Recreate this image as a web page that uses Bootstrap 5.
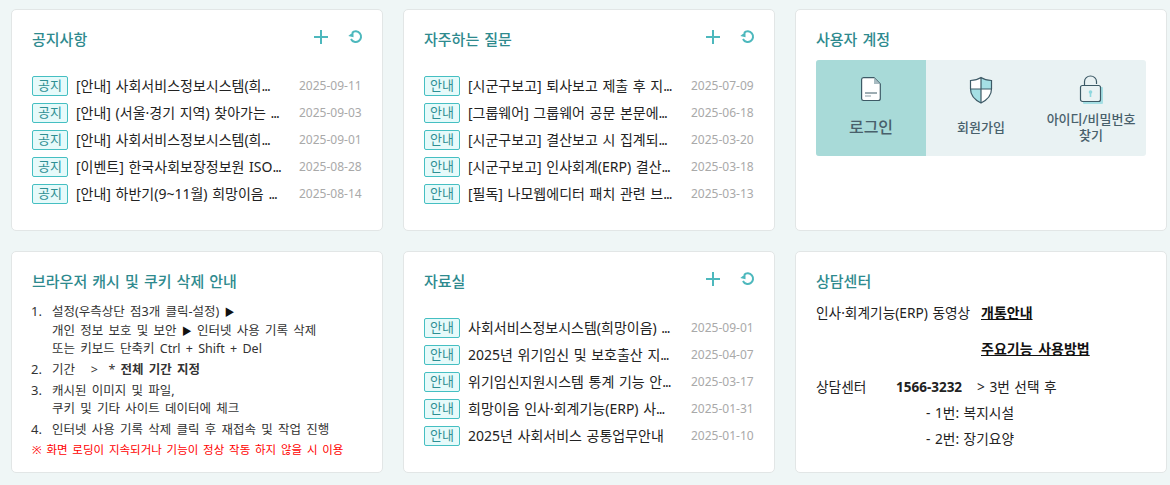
<!DOCTYPE html>
<html lang="ko">
<head>
<meta charset="utf-8">
<title>대시보드</title>
<link href="https://cdn.jsdelivr.net/npm/bootstrap@5.3.0/dist/css/bootstrap.min.css" rel="stylesheet">
<style>
html,body{height:485px;overflow:hidden}
body{background:#eff6f6;font-family:"Noto Sans","Noto Sans CJK KR",sans-serif;color:#212529;font-size:14px}
.board{display:grid;grid-template-columns:repeat(3,372px);grid-template-rows:222px 222px;column-gap:20px;row-gap:20px;padding:9px 0 0 11px}
.panel{border:1px solid #e2e6e6;border-radius:5px;background:#fff;padding:19px 20px 0 20px;position:relative}
.panel-title{font-size:15px;font-weight:500;color:#2e8a8e;margin:0;line-height:20px;word-spacing:1.2px}
.tools{gap:19px;margin-right:-1px;color:#4db8bd}
.tools svg{display:block}
.head{height:20px;margin-bottom:27px}
.rows{margin:0;padding:0;list-style:none}
.rows li{height:27px;display:flex;align-items:flex-start}
.tag{width:36px;height:20px;border:1px solid #45bfc2;border-radius:2px;background:#e6fafa;color:#2e8f93;font-size:13px;line-height:17px;text-align:center;flex:none;margin-right:8px}
.subject{width:223px;font-size:14px;line-height:20px;color:#222;flex:none;white-space:nowrap;overflow:hidden;word-spacing:1px}
.dots{font-style:normal;letter-spacing:-1px}
.when{font-size:12px;line-height:20px;color:#a9a9a9;white-space:nowrap}
.tiles{display:grid;grid-template-columns:repeat(3,110px);height:96px;margin-top:11px;border-radius:3px;overflow:hidden;background:#e9f2f3}
.tile{color:#48606b;font-size:13px;font-weight:500;line-height:16px;text-align:center;display:flex;flex-direction:column;align-items:center;padding-top:15px}
.tile svg{display:block;flex:none}
.tile span{display:flex;align-items:center;justify-content:center;height:32px;margin-top:6px}
.tile.on{background:#a8dad8;font-size:16px}
.guide{margin:12px 0 0 0;padding:0 0 0 20px;font-size:12.5px;line-height:17.6px;color:#333;word-spacing:2px}
.guide li{margin-bottom:3.4px}
.guide li::marker{content:counter(list-item) ".\00a0\00a0\00a0";font-size:13px;word-spacing:0}
.tri{font-size:10px;color:#111}
.warn{font-size:11.5px;line-height:16px;color:#f00;margin:3px 0 0;word-spacing:1.8px}
.info{font-size:13.7px;line-height:20px;color:#222;margin-top:12px;word-spacing:1px}
.info-row{display:flex}
.gap-a{margin-top:16px}
.gap-b{margin-top:18px}
.gap-c{margin-top:6px;padding-left:110px}
.lbl{width:165px;flex:none}
.info a{color:#111;font-weight:700;font-size:14px;text-decoration:underline;word-spacing:2px}
.num{width:80px;flex:none}
.num2{font-weight:700;font-size:13.5px;width:81px;flex:none}
</style>
</head>
<body>
<main class="board">

<section class="panel">
  <div class="head d-flex justify-content-between align-items-start">
    <h2 class="panel-title">공지사항</h2>
    <div class="tools d-flex">
      <svg width="16" height="16" viewBox="0 0 16 16"><path d="M8 1v14M1 8h14" stroke="currentColor" stroke-width="2" fill="none"/></svg>
      <svg width="15" height="16" viewBox="0 0 15 16"><path d="M4 3.900A5.300 5.300 0 1 1 3 10" stroke="currentColor" stroke-width="2" fill="none"/><path d="M0.300 7 5.500 2.800V8.300z" fill="currentColor"/></svg>
    </div>
  </div>
  <ul class="rows">
    <li><span class="tag">공지</span><span class="subject">[안내] 사회서비스정보시스템(희<i class="dots">...</i></span><span class="when">2025-09-11</span></li>
    <li><span class="tag">공지</span><span class="subject">[안내] (서울·경기 지역) 찾아가는 <i class="dots">...</i></span><span class="when">2025-09-03</span></li>
    <li><span class="tag">공지</span><span class="subject">[안내] 사회서비스정보시스템(희<i class="dots">...</i></span><span class="when">2025-09-01</span></li>
    <li><span class="tag">공지</span><span class="subject">[이벤트] 한국사회보장정보원 ISO<i class="dots">...</i></span><span class="when">2025-08-28</span></li>
    <li><span class="tag">공지</span><span class="subject">[안내] 하반기(9~11월) 희망이음 <i class="dots">...</i></span><span class="when">2025-08-14</span></li>
  </ul>
</section>

<section class="panel">
  <div class="head d-flex justify-content-between align-items-start">
    <h2 class="panel-title">자주하는 질문</h2>
    <div class="tools d-flex">
      <svg width="16" height="16" viewBox="0 0 16 16"><path d="M8 1v14M1 8h14" stroke="currentColor" stroke-width="2" fill="none"/></svg>
      <svg width="15" height="16" viewBox="0 0 15 16"><path d="M4 3.900A5.300 5.300 0 1 1 3 10" stroke="currentColor" stroke-width="2" fill="none"/><path d="M0.300 7 5.500 2.800V8.300z" fill="currentColor"/></svg>
    </div>
  </div>
  <ul class="rows">
    <li><span class="tag">안내</span><span class="subject">[시군구보고] 퇴사보고 제출 후 지<i class="dots">...</i></span><span class="when">2025-07-09</span></li>
    <li><span class="tag">안내</span><span class="subject">[그룹웨어] 그룹웨어 공문 본문에<i class="dots">...</i></span><span class="when">2025-06-18</span></li>
    <li><span class="tag">안내</span><span class="subject">[시군구보고] 결산보고 시 집계되<i class="dots">...</i></span><span class="when">2025-03-20</span></li>
    <li><span class="tag">안내</span><span class="subject">[시군구보고] 인사회계(ERP) 결산<i class="dots">...</i></span><span class="when">2025-03-18</span></li>
    <li><span class="tag">안내</span><span class="subject">[필독] 나모웹에디터 패치 관련 브<i class="dots">...</i></span><span class="when">2025-03-13</span></li>
  </ul>
</section>

<section class="panel">
  <h2 class="panel-title">사용자 계정</h2>
  <div class="tiles">
    <div class="tile on">
      <svg width="26" height="30" viewBox="0 0 26 30"><path d="M5.500 2.600H16L22.300 9V23.500A2 2 0 0 1 20.300 25.500H5.500A2 2 0 0 1 3.600 23.500V4.500A2 2 0 0 1 5.500 2.600Z" fill="#fff" stroke="#3d5a66" stroke-width="1.200"/><path d="M16 2.600V9H22.300Z" fill="#a9bcc2"/><path d="M7 18H19" stroke="#3d5a66" stroke-width="1"/><path d="M7 21H13" stroke="#8b9da5" stroke-width="1"/></svg>
      <span>로그인</span>
    </div>
    <div class="tile">
      <svg width="26" height="30" viewBox="0 0 26 30"><path d="M13 2.500C16 4.500 20 5.400 23.500 5.500V14C23.500 20 19 25 13 28C7 25 2.500 20 2.500 14V5.500C6 5.400 10 4.500 13 2.500Z" fill="#fff"/><path d="M13 2.500C16 4.500 20 5.400 23.500 5.500V14H13Z" fill="#a5dfe4"/><path d="M13 14H2.500C2.500 20 7 25 13 28Z" fill="#a5dfe4"/><path d="M13 2.500C16 4.500 20 5.400 23.500 5.500V14C23.500 20 19 25 13 28C7 25 2.500 20 2.500 14V5.500C6 5.400 10 4.500 13 2.500ZM13 2.500V28M2.500 14H23.500" fill="none" stroke="#3d5a66" stroke-width="1.200"/></svg>
      <span>회원가입</span>
    </div>
    <div class="tile">
      <svg width="26" height="30" viewBox="0 0 26 30"><rect x="5" y="12" width="20" height="17" rx="1" fill="#a5dfe4"/><rect x="2.500" y="10.500" width="20" height="16" rx="2" fill="#e9f2f3" stroke="#3d5a66" stroke-width="1.200"/><path d="M6.500 10.500V6.500A6 5.500 0 0 1 18.500 6.500V9" fill="none" stroke="#3d5a66" stroke-width="1.200"/><circle cx="12.500" cy="17" r="1.800" fill="#8fd8df"/><path d="M12.500 17v5" stroke="#8fd8df" stroke-width="1.600"/></svg>
      <span>아이디/비밀번호<br>찾기</span>
    </div>
  </div>
</section>

<section class="panel">
  <h2 class="panel-title">브라우저 캐시 및 쿠키 삭제 안내</h2>
  <ol class="guide">
    <li>설정(우측상단 점3개 클릭-설정) <span class="tri">▶</span><br>개인 정보 보호 및 보안 <span class="tri">▶</span> 인터넷 사용 기록 삭제<br>또는 키보드 단축키 Ctrl + Shift + Del</li>
    <li>기간 &nbsp; &gt; &nbsp;* <b>전체 기간 지정</b></li>
    <li>캐시된 이미지 및 파일,<br>쿠키 및 기타 사이트 데이터에 체크</li>
    <li>인터넷 사용 기록 삭제 클릭 후 재접속 및 작업 진행</li>
  </ol>
  <p class="warn">※ 화면 로딩이 지속되거나 기능이 정상 작동 하지 않을 시 이용</p>
</section>

<section class="panel">
  <div class="head d-flex justify-content-between align-items-start">
    <h2 class="panel-title">자료실</h2>
    <div class="tools d-flex">
      <svg width="16" height="16" viewBox="0 0 16 16"><path d="M8 1v14M1 8h14" stroke="currentColor" stroke-width="2" fill="none"/></svg>
      <svg width="15" height="16" viewBox="0 0 15 16"><path d="M4 3.900A5.300 5.300 0 1 1 3 10" stroke="currentColor" stroke-width="2" fill="none"/><path d="M0.300 7 5.500 2.800V8.300z" fill="currentColor"/></svg>
    </div>
  </div>
  <ul class="rows">
    <li><span class="tag">안내</span><span class="subject">사회서비스정보시스템(희망이음) <i class="dots">...</i></span><span class="when">2025-09-01</span></li>
    <li><span class="tag">안내</span><span class="subject">2025년 위기임신 및 보호출산 지<i class="dots">...</i></span><span class="when">2025-04-07</span></li>
    <li><span class="tag">안내</span><span class="subject">위기임신지원시스템 통계 기능 안<i class="dots">...</i></span><span class="when">2025-03-17</span></li>
    <li><span class="tag">안내</span><span class="subject">희망이음 인사·회계기능(ERP) 사<i class="dots">...</i></span><span class="when">2025-01-31</span></li>
    <li><span class="tag">안내</span><span class="subject">2025년 사회서비스 공통업무안내</span><span class="when">2025-01-10</span></li>
  </ul>
</section>

<section class="panel">
  <h2 class="panel-title">상담센터</h2>
  <div class="info">
    <div class="info-row"><span class="lbl">인사·회계기능(ERP) 동영상</span><a href="#">개통안내</a></div>
    <div class="info-row gap-a"><span class="lbl"></span><a href="#">주요기능 사용방법</a></div>
    <div class="info-row gap-b"><span class="num">상담센터</span><span class="num2">1566-3232</span><span>&gt; 3번 선택 후</span></div>
    <div class="info-row gap-c">- 1번: 복지시설</div>
    <div class="info-row gap-c">- 2번: 장기요양</div>
  </div>
</section>

</main>
<script src="https://cdn.jsdelivr.net/npm/bootstrap@5.3.0/dist/js/bootstrap.bundle.min.js"></script>
</body>
</html>
